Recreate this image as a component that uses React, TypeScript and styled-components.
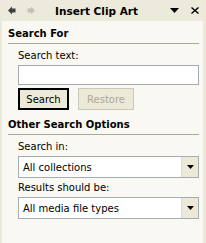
import React from 'react';
import styled, {createGlobalStyle} from "styled-components";

const GlobalStyle = createGlobalStyle`
  html, body {
    margin: 0;
    padding: 0;
    background: #ece9d8;
  }
  body {
    font-family: Tahoma, "DejaVu Sans", "Liberation Sans", sans-serif;
    font-size: 10px;
    color: #000;
  }
`

const App = () => {
    return (
        <>
            <GlobalStyle/>
            <Pane>
                <TitleBar>
                    <NavArrow dir="left" active/>
                    <NavArrow dir="right"/>
                    <Title>Insert Clip Art</Title>
                    <TitleTools>
                        <svg width="9" height="5" viewBox="0 0 9 5">
                            <path d="M0 0H9L4.5 5Z" fill="#000"/>
                        </svg>
                        <svg width="8" height="7" viewBox="0 0 8 7">
                            <path d="M0.5 0.5L7.5 6.5M7.5 0.5L0.5 6.5" stroke="#000" strokeWidth="1.4"/>
                        </svg>
                    </TitleTools>
                </TitleBar>
                <Body>
                    <Section>
                        <SectionHead>Search For</SectionHead>
                        <Field>
                            <Label>Search text:</Label>
                            <TextBox/>
                            <ButtonRow>
                                <Button isDefault>Search</Button>
                                <Button disabled>Restore</Button>
                            </ButtonRow>
                        </Field>
                    </Section>
                    <Section>
                        <SectionHead>Other Search Options</SectionHead>
                        <Field>
                            <Label>Search in:</Label>
                            <Select value="All collections"/>
                            <Label>Results should be:</Label>
                            <Select value="All media file types"/>
                        </Field>
                    </Section>
                </Body>
            </Pane>
        </>
    );
};

export default App;

// ---------------------------
const NavArrow = ({dir, active}: { dir: 'left' | 'right', active?: boolean }) => (
    <ArrowWrap>
        <svg width="8" height="9" viewBox="0 0 8 9">
            {dir === 'left'
                ? <path d="M0 4.5L4 0.5V2.5H7.5V6.5H4V8.5Z" fill={active ? '#404040' : '#c4c2b4'}/>
                : <path d="M8 4.5L4 0.5V2.5H0.5V6.5H4V8.5Z" fill={active ? '#404040' : '#c4c2b4'}/>}
        </svg>
    </ArrowWrap>
)

const Select = ({value}: { value: string }) => (
    <SelectBox>
        <SelectValue>{value}</SelectValue>
        <SelectButton>
            <svg width="7" height="4" viewBox="0 0 7 4">
                <path d="M0 0H7L3.5 4Z" fill="#000"/>
            </svg>
        </SelectButton>
    </SelectBox>
)

const Pane = styled.div`
  width: 206px;
  height: 243px;
  box-sizing: border-box;
  padding: 0 3px 0 2px;
  display: flex;
  flex-direction: column;
  background: #ece9d8;
`

const TitleBar = styled.div`
  height: 21px;
  display: flex;
  align-items: center;
  padding: 0 0 0 5px;
  background: #ebeadb;
`

const ArrowWrap = styled.span`
  width: 9px;
  display: flex;
  justify-content: center;
  margin-right: 10px;
`

const Title = styled.span`
  font-weight: bold;
  font-size: 10.5px;
  margin-left: 10px;
  flex: 1;
`

const TitleTools = styled.div`
  display: flex;
  align-items: center;
  gap: 12px;
  padding-right: 4px;
`

const Body = styled.div`
  flex: 1;
  background: #f9f8f2;
  padding: 6px 4px 0 6px;
`

const Section = styled.div``

const SectionHead = styled.div`
  font-weight: bold;
  line-height: 14px;
  padding-bottom: 2px;
  border-bottom: 1px solid #aca899;
`

const Field = styled.div`
  padding: 5px 0 0 10px;
  display: flex;
  flex-direction: column;
`

const Label = styled.div`
  line-height: 13px;
  margin-bottom: 3px;
`

const TextBox = styled.div`
  height: 18px;
  border: 1px solid #a5acb2;
  background: #fff;
  margin-bottom: 3px;
`

const ButtonRow = styled.div`
  display: flex;
  gap: 9px;
  margin-bottom: 8px;
`

const Button = styled.button<{ isDefault?: boolean }>`
  font: inherit;
  height: 22px;
  padding: 0 6px;
  background: #ece9d8;
  color: ${props => props.disabled ? '#aca899' : '#000'};
  border: ${props => props.isDefault ? '2px solid #000' : '1px solid #cac8bb'};
  ${props => props.disabled && 'width: 56px;'}
  ${props => props.isDefault && 'width: 51px;'}
`

const SelectBox = styled.div`
  height: 20px;
  display: flex;
  border: 1px solid #a5acb2;
  background: #fff;
  margin-bottom: 3px;
`

const SelectValue = styled.div`
  flex: 1;
  display: flex;
  align-items: center;
  padding-left: 4px;
`

const SelectButton = styled.div`
  width: 16px;
  display: flex;
  align-items: center;
  justify-content: center;
  background: #ece9d8;
  border-left: 1px solid #e0ddcd;
`
